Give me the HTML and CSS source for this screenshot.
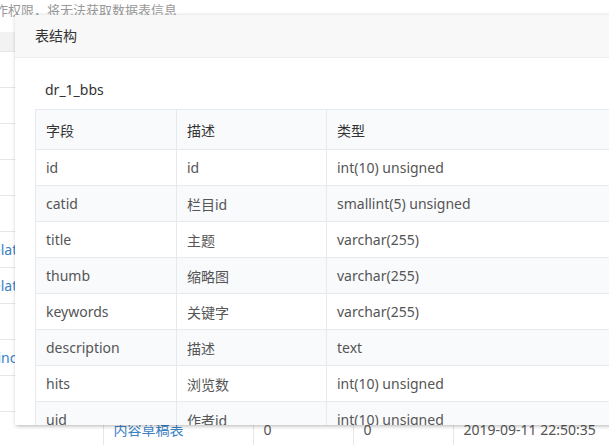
FILE: index.html
```html
<!DOCTYPE html>
<html lang="zh-CN">
<head>
    <meta charset="UTF-8">
    <meta name="viewport" content="width=device-width, initial-scale=1.0">
    <title>数据表</title>
    <link rel="stylesheet" href="styles.css">
</head>
<body>
    <div class="page">
        <p class="tip">注意：如果没有操作权限，将无法获取数据表信息</p>
        <table class="list">
            <thead>
                <tr><th>表名</th><th>说明</th><th>数据量</th><th>大小</th><th>更新时间</th></tr>
            </thead>
            <tbody>
                <tr><td><a>dr_1_bbs</a></td><td><a>主表</a></td><td>0</td><td>0</td><td>2019-09-11 22:50:35</td></tr>
                <tr><td><a>dr_1_bbs_hits</a></td><td><a>点击表</a></td><td>0</td><td>0</td><td>2019-09-11 22:50:35</td></tr>
                <tr><td><a>dr_1_bbs_site</a></td><td><a>站点表</a></td><td>0</td><td>0</td><td>2019-09-11 22:50:35</td></tr>
                <tr><td><a>dr_1_bbs_tag</a></td><td><a>标签表</a></td><td>0</td><td>0</td><td>2019-09-11 22:50:35</td></tr>
                <tr><td><a>dr_1_bbs_flag</a></td><td><a>推荐位表</a></td><td>0</td><td>0</td><td>2019-09-11 22:50:35</td></tr>
                <tr><td><a>dr_1_bbs_m_relation</a></td><td><a>关联表</a></td><td>0</td><td>0</td><td>2019-09-11 22:50:35</td></tr>
                <tr><td><a>dr_1_bbs_m_relation_0</a></td><td><a>用户关联表</a></td><td>0</td><td>0</td><td>2019-09-11 22:50:35</td></tr>
                <tr><td><a>dr_1_bbs_log</a></td><td><a>日志表</a></td><td>0</td><td>0</td><td>2019-09-11 22:50:35</td></tr>
                <tr><td><a>dr_1_bbs_province</a></td><td><a>地区表</a></td><td>0</td><td>0</td><td>2019-09-11 22:50:35</td></tr>
                <tr><td><a>dr_1_bbs_buy</a></td><td><a>购买表</a></td><td>0</td><td>0</td><td>2019-09-11 22:50:35</td></tr>
                <tr><td><a>dr_1_bbs_d</a></td><td><a>内容草稿表</a></td><td>0</td><td>0</td><td>2019-09-11 22:50:35</td></tr>
            </tbody>
        </table>
    </div>

    <div class="layer">
        <div class="layer-title">表结构</div>
        <div class="layer-content">
            <div class="caption">dr_1_bbs</div>
            <table class="struct">
                <colgroup><col class="c-field"><col class="c-desc"><col></colgroup>
                <thead>
                    <tr><th>字段</th><th>描述</th><th>类型</th></tr>
                </thead>
                <tbody>
                    <tr><td>id</td><td>id</td><td>int(10) unsigned</td></tr>
                    <tr><td>catid</td><td>栏目id</td><td>smallint(5) unsigned</td></tr>
                    <tr><td>title</td><td>主题</td><td>varchar(255)</td></tr>
                    <tr><td>thumb</td><td>缩略图</td><td>varchar(255)</td></tr>
                    <tr><td>keywords</td><td>关键字</td><td>varchar(255)</td></tr>
                    <tr><td>description</td><td>描述</td><td>text</td></tr>
                    <tr><td>hits</td><td>浏览数</td><td>int(10) unsigned</td></tr>
                    <tr><td>uid</td><td>作者id</td><td>int(10) unsigned</td></tr>
                    <tr><td>author</td><td>笔名</td><td>varchar(50)</td></tr>
                    <tr><td>status</td><td>状态</td><td>tinyint(2)</td></tr>
                </tbody>
            </table>
        </div>
    </div>
</body>
</html>
```

FILE: styles.css
```css
html, body {
    overflow: hidden;
}
body {
    margin: 0;
    font-family: "Noto Sans", "Noto Sans CJK SC", sans-serif;
    font-size: 14px;
    color: #555;
    background: #fff;
}
.page {
    margin-left: -109px;
    width: 800px;
}
.tip {
    margin: 0 0 12px;
    font-size: 13px;
    line-height: 20px;
    color: #999;
}
.list {
    border-collapse: collapse;
    width: 760px;
    margin-left: 2px;
    table-layout: fixed;
}
.list th {
    height: 19px;
    padding: 0 10px;
    font-size: 12px;
    line-height: 19px;
    text-align: left;
    background: #f2f2f2;
    border-bottom: 1px solid #e6e6e6;
}
.list td {
    padding: 8px 10px;
    line-height: 19px;
    white-space: nowrap;
    border-bottom: 1px solid #e6e6e6;
}
.list td + td {
    border-left: 1px solid #e6e6e6;
}
.list th:nth-child(1) { width: 190px; }
.list th:nth-child(2) { width: 130px; }
.list th:nth-child(3) { width: 80px; }
.list th:nth-child(4) { width: 80px; }
.list a {
    color: #3b82c4;
}

.layer {
    position: absolute;
    left: 15px;
    top: 15px;
    width: 760px;
    height: 410px;
    background: #fff;
    box-shadow: 1px 1px 4px rgba(0, 0, 0, 0.3);
    overflow: hidden;
}
.layer-title {
    height: 42px;
    line-height: 42px;
    padding: 0 80px 0 20px;
    border-bottom: 1px solid #eee;
    background: #f8f8f8;
    color: #333;
    font-size: 14px;
}
.layer-content {
    padding: 20px;
}
.caption {
    padding: 0 10px;
    line-height: 24px;
    margin-bottom: 7px;
    color: #333;
}
.struct {
    width: 100%;
    border-collapse: collapse;
    table-layout: fixed;
    border: 1px solid #e6e9ee;
}
.c-field { width: 141px; }
.c-desc { width: 150px; }
.struct th,
.struct td {
    padding: 0 10px;
    text-align: left;
    font-weight: normal;
    border: 1px solid #e6e9ee;
    white-space: nowrap;
}
.struct th {
    height: 39px;
    color: #333;
    background: #f9fafc;
}
.struct td {
    height: 35px;
    color: #555;
}
.struct tbody tr:nth-child(even) td {
    background: #f9fafc;
}
```
